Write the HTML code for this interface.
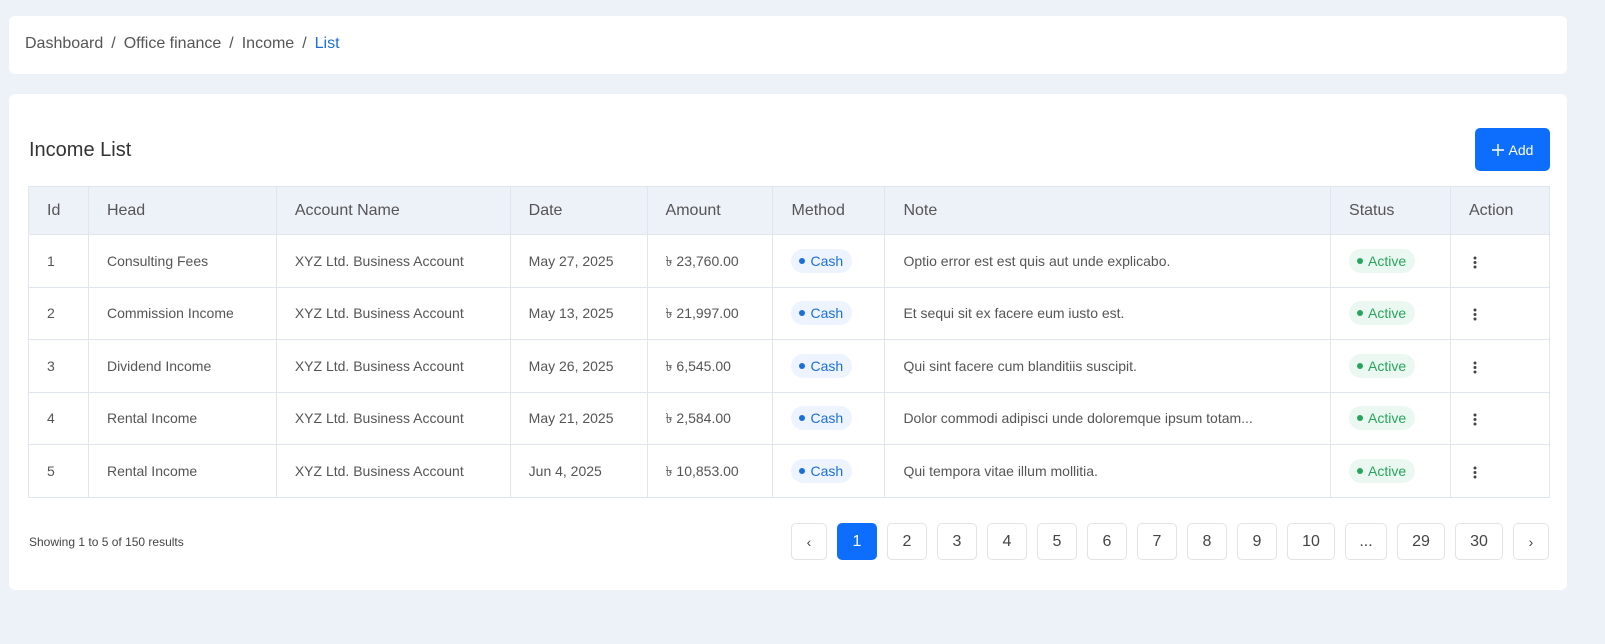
<!DOCTYPE html>
<html><head><meta charset="utf-8"><style>
*{box-sizing:border-box;margin:0;padding:0}
body{width:1605px;height:644px;background:#edf1f8;font-family:"Liberation Sans",sans-serif;color:#555;position:relative;overflow:hidden}
.bc{position:absolute;left:9px;top:16px;width:1558px;height:58px;background:#fff;border-radius:6px;font-size:16px;color:#555;padding:19px 0 0 16px}
.bc span.s{margin:0 8px}
.bc .a{color:#1b6fd6}
.card{position:absolute;left:9px;top:94px;width:1558px;height:496px;background:#fff;border-radius:6px}
.title{position:absolute;left:20px;top:45px;font-size:20px;color:#333}
.add{position:absolute;left:1466px;top:34px;width:75px;height:43px;background:#0d6efd;border-radius:5px;color:#fff;font-size:14px;display:flex;align-items:center;justify-content:center;gap:5px}
table{position:absolute;left:19px;top:92px;width:1522px;border-collapse:collapse;font-size:14px}
td,th{border:1px solid #e1e6ee;text-align:left;font-weight:normal;padding:0 0 0 18px;vertical-align:middle}
th{background:#edf1f8;height:48px;font-size:16px;color:#555}
td{height:52.5px;color:#555;line-height:20px}
.pill{display:inline-block;padding:2px 9px 2px 8px;border-radius:12px;font-size:14px;line-height:20px;vertical-align:middle}
.cash{background:#eef4ff;color:#1b6fd6}
.act{background:#ebf8f1;color:#27a55c}
.dot{display:inline-block;width:6px;height:6px;border-radius:50%;background:currentColor;margin-right:5px;vertical-align:2px}
.dots{display:inline-block;vertical-align:middle;margin-left:4px}
.show{position:absolute;left:20px;top:441px;font-size:12px;color:#444}
.pg{position:absolute;right:18px;top:429px;display:flex;gap:10px}
.pg div{height:37px;width:40px;border:1px solid #e3e3e3;border-radius:5px;display:flex;align-items:center;justify-content:center;font-size:16px;color:#444}
.pg .w{width:48px}.pg .e{width:42px}.pg .ar{width:36px;font-size:14px}
.pg .on{background:#0d6efd;color:#fff;border-color:#0d6efd}
</style></head><body>
<div class="bc">Dashboard<span class="s">/</span>Office finance<span class="s">/</span>Income<span class="s">/</span><span class="a">List</span></div>
<div class="card">
<div class="title">Income List</div>
<div class="add"><svg width="12" height="12" viewBox="0 0 12 12"><path d="M6 0v12M0 6h12" stroke="#fff" stroke-width="1.4"/></svg>Add</div>
<table>
<colgroup><col style="width:60px"><col style="width:188px"><col style="width:234px"><col style="width:137px"><col style="width:126px"><col style="width:112px"><col style="width:446px"><col style="width:120px"><col style="width:99px"></colgroup>
<tr><th>Id</th><th>Head</th><th>Account Name</th><th>Date</th><th>Amount</th><th>Method</th><th>Note</th><th>Status</th><th>Action</th></tr>
<tr><td>1</td><td>Consulting Fees</td><td>XYZ Ltd. Business Account</td><td>May 27, 2025</td><td>৳ 23,760.00</td><td><span class="pill cash"><span class="dot"></span>Cash</span></td><td>Optio error est est quis aut unde explicabo.</td><td><span class="pill act"><span class="dot"></span>Active</span></td><td><svg class="dots" width="4" height="13" viewBox="0 0 4 13"><circle cx="2" cy="2" r="1.5" fill="#444"/><circle cx="2" cy="6.5" r="1.5" fill="#444"/><circle cx="2" cy="11" r="1.5" fill="#444"/></svg></td></tr>
<tr><td>2</td><td>Commission Income</td><td>XYZ Ltd. Business Account</td><td>May 13, 2025</td><td>৳ 21,997.00</td><td><span class="pill cash"><span class="dot"></span>Cash</span></td><td>Et sequi sit ex facere eum iusto est.</td><td><span class="pill act"><span class="dot"></span>Active</span></td><td><svg class="dots" width="4" height="13" viewBox="0 0 4 13"><circle cx="2" cy="2" r="1.5" fill="#444"/><circle cx="2" cy="6.5" r="1.5" fill="#444"/><circle cx="2" cy="11" r="1.5" fill="#444"/></svg></td></tr>
<tr><td>3</td><td>Dividend Income</td><td>XYZ Ltd. Business Account</td><td>May 26, 2025</td><td>৳ 6,545.00</td><td><span class="pill cash"><span class="dot"></span>Cash</span></td><td>Qui sint facere cum blanditiis suscipit.</td><td><span class="pill act"><span class="dot"></span>Active</span></td><td><svg class="dots" width="4" height="13" viewBox="0 0 4 13"><circle cx="2" cy="2" r="1.5" fill="#444"/><circle cx="2" cy="6.5" r="1.5" fill="#444"/><circle cx="2" cy="11" r="1.5" fill="#444"/></svg></td></tr>
<tr><td>4</td><td>Rental Income</td><td>XYZ Ltd. Business Account</td><td>May 21, 2025</td><td>৳ 2,584.00</td><td><span class="pill cash"><span class="dot"></span>Cash</span></td><td>Dolor commodi adipisci unde doloremque ipsum totam...</td><td><span class="pill act"><span class="dot"></span>Active</span></td><td><svg class="dots" width="4" height="13" viewBox="0 0 4 13"><circle cx="2" cy="2" r="1.5" fill="#444"/><circle cx="2" cy="6.5" r="1.5" fill="#444"/><circle cx="2" cy="11" r="1.5" fill="#444"/></svg></td></tr>
<tr><td>5</td><td>Rental Income</td><td>XYZ Ltd. Business Account</td><td>Jun 4, 2025</td><td>৳ 10,853.00</td><td><span class="pill cash"><span class="dot"></span>Cash</span></td><td>Qui tempora vitae illum mollitia.</td><td><span class="pill act"><span class="dot"></span>Active</span></td><td><svg class="dots" width="4" height="13" viewBox="0 0 4 13"><circle cx="2" cy="2" r="1.5" fill="#444"/><circle cx="2" cy="6.5" r="1.5" fill="#444"/><circle cx="2" cy="11" r="1.5" fill="#444"/></svg></td></tr>
</table>
<div class="show">Showing 1 to 5 of 150 results</div>
<div class="pg"><div class="ar">‹</div><div class="on">1</div><div>2</div><div>3</div><div>4</div><div>5</div><div>6</div><div>7</div><div>8</div><div>9</div><div class="w">10</div><div class="e">...</div><div class="w">29</div><div class="w">30</div><div class="ar">›</div></div>
</div>
</body></html>
